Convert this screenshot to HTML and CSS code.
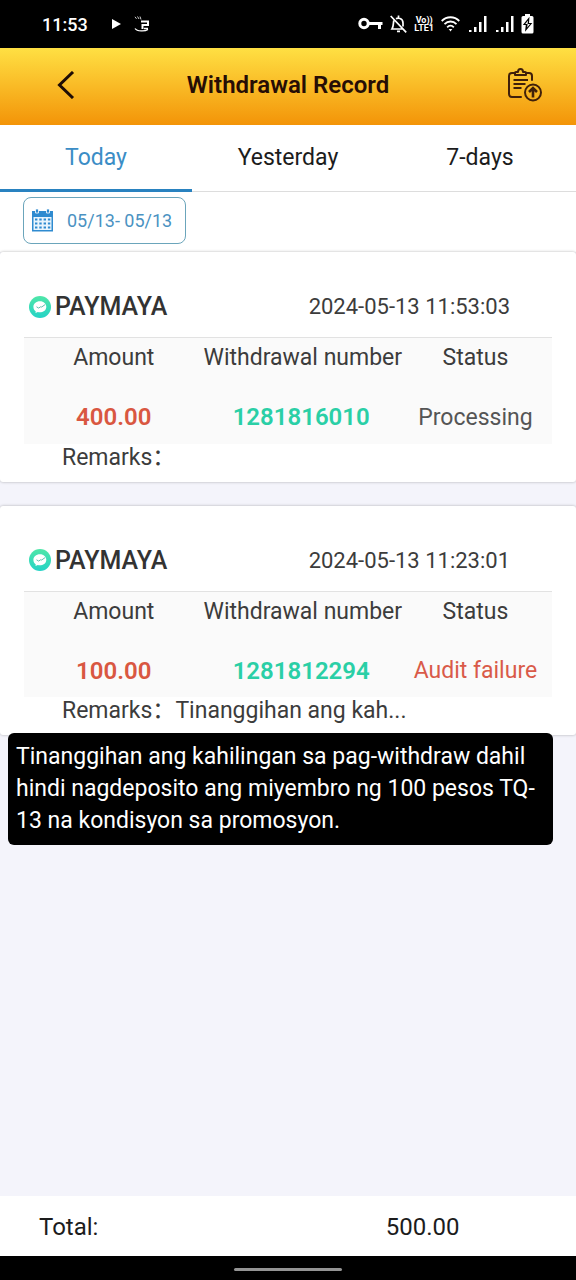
FILE: index.html
```html
<!DOCTYPE html>
<html lang="en">
<head>
<meta charset="utf-8">
<meta name="viewport" content="width=device-width, initial-scale=1">
<title>Withdrawal Record</title>
<link rel="stylesheet" href="styles.css">
</head>
<body>
<svg class="defs" aria-hidden="true">
  <linearGradient id="mint" x1="0" y1="0" x2="0" y2="1"><stop offset="0" stop-color="#4fe6a8"/><stop offset="1" stop-color="#25d3c6"/></linearGradient>
  <symbol id="paymaya" viewBox="0 0 22 22">
    <circle cx="11" cy="11" r="11" fill="url(#mint)"/>
    <path d="M11 5.200c-4 0-6.600 2.500-6.600 5.600 0 2 .9 3.500 2.300 4.500l-.2 1.600 2.300-.8c3.700.8 8.500-.7 8.500-5.300 0-3.100-2.500-5.600-6.300-5.600z" fill="#fff"/>
    <path d="M7.500 10.800l2.200 1.300 1.800-1.300 1.200.2L16.200 8.500" fill="none" stroke="#5fbfae" stroke-width="1"/>
  </symbol>
  <symbol id="signal" viewBox="0 0 18 16">
    <path d="M0 14h2.500v2H0zM5 11h2.500v5H5zM10 6h2.500v10H10zM15 0h2.500v16H15z" fill="#fff"/>
  </symbol>
</svg>
<div class="screen">
  <div class="status">
    <span class="clock">11:53</span>
    <svg class="play" width="9" height="10" viewBox="0 0 9 10"><path d="M0 0l9 5-9 5z" fill="#fff"/></svg>
    <svg width="16" height="16" viewBox="0 0 16 16" fill="none" stroke="#fff">
      <path d="M7 5.500h7v3.500H8.500V13" stroke-width="2"/>
      <path d="M1 .8l1.500 2M3.500.5l1.500 2.500M6 .5l1 3" stroke-width="1" opacity=".8"/>
      <path d="M1 12.500c2 3 10 3 13 1M10 12.500h4" stroke-width="1.300"/>
    </svg>
    <div class="status-icons">
      <svg width="25" height="14" viewBox="0 0 25 14" fill="none" stroke="#fff" stroke-width="3"><circle cx="6" cy="6.500" r="4.200"/><path d="M10 6.500h14.500M21.500 7v5"/></svg>
      <svg width="17" height="18" viewBox="0 0 17 18" fill="none" stroke="#fff" stroke-width="1.700"><path d="M.7 1l15.500 16.300M3.800 5.500C3.200 8 3.600 11.500 2 14h10.500M6 3.700C7.500 2.800 13 2.500 13 8v3.500M8.500.5V3M7 16.300h3"/></svg>
      <span class="volte"><span>Vo))</span><span>LTE1</span></span>
      <svg width="19" height="16" viewBox="0 0 19 16" fill="none" stroke="#fff" stroke-width="1.800"><path d="M.7 5c5-5 12.600-5 17.600 0M3.500 8.200c3.500-3.600 8.500-3.600 12 0M6.200 11.300c2-2.200 4.600-2.200 6.600 0"/><path d="M7.700 13h3.600L9.500 15.500z" fill="#fff" stroke="none"/></svg>
      <svg class="bars" width="18" height="16"><use href="#signal"/></svg>
      <svg class="bars" width="18" height="16"><use href="#signal"/></svg>
      <svg width="13" height="20" viewBox="0 0 13 20"><path d="M4 0h5v2h2q1.500 0 1.500 1.500V18q0 1.500-1.500 1.500H2Q.5 19.500.5 18V3.500Q.5 2 2 2h2z" fill="#fff"/><path d="M8.500 2.800L1.800 11h3l-.8 6.800L11.300 9H8z" fill="#000"/><path d="M7.100 6.500L4.200 10h2.400l-.4 3.600L9 10H6.500z" fill="#fff"/></svg>
    </div>
  </div>

  <header class="header">
    <button class="icon-button" type="button" aria-label="Back">
      <svg width="18" height="28" viewBox="0 0 18 28" fill="none" stroke="#1f0d05" stroke-width="3"><path d="M16 1L2.500 14 16 27"/></svg>
    </button>
    <h1>Withdrawal Record</h1>
    <button class="icon-button end" type="button" aria-label="Submitted records">
      <svg width="36" height="34" viewBox="0 0 36 34" fill="none" stroke="#40200a" stroke-width="2">
        <path d="M8 5H5Q2 5 2 8v18q0 3 3 3h9M19 5h3q3 0 3 3v4" stroke-linecap="round"/>
        <path d="M8 7V4.500Q8 4 9 4h2Q11 1 13.500 1T16 4h2q1 0 1 .5V7z" stroke-linejoin="round"/>
        <path d="M6.500 12h14.500M6.500 16h12M6.500 20h8"/>
        <circle cx="26" cy="24.500" r="8"/>
        <path d="M26 29.500v-9M22 24l4-4 4 4" stroke-width="2.600"/>
      </svg>
    </button>
  </header>

  <nav class="tabs">
    <button class="tab active" type="button">Today</button>
    <button class="tab" type="button">Yesterday</button>
    <button class="tab" type="button">7-days</button>
  </nav>

  <div class="filter">
    <button class="date-range" type="button">
      <svg width="21" height="23" viewBox="0 0 21 23">
        <path d="M0 2h21v20.500H0z" fill="#2f8bd0"/>
        <path d="M1.500 8h18v13h-18z" fill="#e9f5fd"/>
        <path d="M3.500 0h3v4h-3zM14.500 0h3v4h-3z" fill="#2f8bd0" stroke="#fff" stroke-width=".8"/>
        <path d="M3 10.500h15.500M3 14.500h15.500M3 18.500h15.500" stroke="#2f8bd0" stroke-width="2.200" stroke-dasharray="2.400 1.900"/>
      </svg>
      <span>05/13- 05/13</span>
    </button>
  </div>

  <main class="records">
    <article class="card">
      <div class="card-head">
        <h2><svg width="22" height="22"><use href="#paymaya"/></svg>PAYMAYA</h2>
        <time datetime="2024-05-13T11:53:03">2024-05-13 11:53:03</time>
      </div>
      <table>
        <colgroup><col class="col-amount"><col class="col-number"><col></colgroup>
        <thead><tr><th>Amount</th><th>Withdrawal number</th><th>Status</th></tr></thead>
        <tbody><tr><td class="amount">400.00</td><td class="number">1281816010</td><td>Processing</td></tr></tbody>
      </table>
      <p class="remarks">Remarks：</p>
    </article>

    <article class="card">
      <div class="card-head">
        <h2><svg width="22" height="22"><use href="#paymaya"/></svg>PAYMAYA</h2>
        <time datetime="2024-05-13T11:23:01">2024-05-13 11:23:01</time>
      </div>
      <table>
        <colgroup><col class="col-amount"><col class="col-number"><col></colgroup>
        <thead><tr><th>Amount</th><th>Withdrawal number</th><th>Status</th></tr></thead>
        <tbody><tr><td class="amount">100.00</td><td class="number">1281812294</td><td class="failed">Audit failure</td></tr></tbody>
      </table>
      <p class="remarks">Remarks：<span>Tinanggihan ang kah...</span></p>
      <div class="tooltip" role="tooltip">Tinanggihan ang kahilingan sa pag-withdraw dahil hindi nagdeposito ang miyembro ng 100 pesos TQ-13 na kondisyon sa promosyon.</div>
    </article>
  </main>

  <footer class="total"><span>Total:</span><span>500.00</span></footer>
  <div class="home-bar"><span></span></div>
</div>
</body>
</html>
```

FILE: styles.css
```css
* { box-sizing: border-box; }

body {
  margin: 0;
  font-family: Roboto, "Noto Sans CJK SC", sans-serif;
  font-size: 23px;
  color: #3c3c3c;
  background: #f4f4fb;
}

button {
  border: 0;
  padding: 0;
  background: none;
  font: inherit;
  color: inherit;
}

svg { display: block; flex: none; }
.defs { position: absolute; width: 0; height: 0; }

.screen {
  display: flex;
  flex-direction: column;
  min-height: 100vh;
}

.status {
  display: flex;
  align-items: center;
  height: 48px;
  padding: 0 42px;
  background: #000;
  color: #fff;
}
.clock { font-size: 18px; font-weight: 500; }
.play { margin: 0 13px 0 24px; }
.status-icons {
  display: flex;
  align-items: center;
  gap: 7px;
  margin-left: auto;
}
.volte {
  display: flex;
  flex-direction: column;
  align-items: center;
  font-size: 9px;
  font-weight: 700;
  line-height: 8px;
}
.bars { margin-left: 2px; }

.header {
  display: grid;
  grid-template-columns: 1fr auto 1fr;
  align-items: center;
  height: 77px;
  padding: 0 33px 3px;
  background: linear-gradient(#ffe043, #f39408);
}
.header h1 {
  margin: 0;
  font-size: 24px;
  font-weight: 600;
  color: #260d05;
}
.icon-button {
  display: flex;
  align-items: center;
  height: 48px;
  padding-left: 24px;
}
.icon-button.end {
  justify-self: end;
  padding: 0;
}

.tabs {
  display: grid;
  grid-template-columns: repeat(3, 1fr);
  height: 67px;
  background: #fff;
}
.tab {
  padding-bottom: 2px;
  border-bottom: 1px solid #ddd;
  color: #1c1c1c;
}
.tab.active {
  padding-bottom: 0;
  border-bottom: 3px solid #2982c0;
  color: #3b8dc6;
}

.filter {
  padding: 5px 23px 8px;
  background: #fff;
}
.date-range {
  display: flex;
  align-items: center;
  gap: 14px;
  height: 47px;
  padding: 0 13px 0 8px;
  border: 1px solid #6ba5bb;
  border-radius: 8px;
  font-size: 18px;
  color: #4a92c2;
}

.records {
  display: flex;
  flex: 1;
  flex-direction: column;
  gap: 24px;
}
.card {
  position: relative;
  padding: 24px 24px 10px;
  border-radius: 3px;
  background: #fff;
  box-shadow: 0 0 3px rgba(0, 0, 0, 0.3);
}
.card-head {
  display: flex;
  align-items: center;
  justify-content: space-between;
  height: 61px;
  padding: 0 42px 0 5px;
}
.card-head h2 {
  display: flex;
  align-items: center;
  gap: 4px;
  margin: 0;
  font-size: 25px;
  font-weight: 500;
  color: #333;
}
.card-head time { font-size: 22px; }

table {
  width: 100%;
  border-collapse: collapse;
  border-top: 1px solid #e2e2e2;
  table-layout: fixed;
  background: #fafafa;
}
.col-amount { width: 34%; }
.col-number { width: 37%; }
th, td {
  padding: 0;
  font-weight: 400;
  text-align: center;
  white-space: nowrap;
}
th { height: 40px; }
td { height: 66px; padding-top: 13px; color: #555; }
td.amount { font-size: 24px; font-weight: 600; color: #d95741; }
td.number { font-size: 24px; font-weight: 600; color: #2acfa6; }
td.failed { color: #d95a49; }

.remarks {
  margin: 0;
  padding-left: 38px;
  line-height: 28px;
}

.tooltip {
  position: absolute;
  top: calc(100% - 2px);
  left: 8px;
  right: 23px;
  padding: 8px;
  border-radius: 6px;
  background: #000;
  color: #fff;
  line-height: 32px;
}

.total {
  display: grid;
  grid-template-columns: 3fr 4fr;
  align-items: center;
  height: 60px;
  padding: 1px 0 0 39px;
  background: #fff;
  font-size: 24px;
  color: #1c1c1c;
}
.total span:last-child { margin: 0 auto; }

.home-bar {
  display: flex;
  align-items: center;
  justify-content: center;
  height: 24px;
  background: #000;
}
.home-bar span {
  width: 108px;
  height: 3px;
  margin-top: 3px;
  border-radius: 2px;
  background: #949494;
}
```
